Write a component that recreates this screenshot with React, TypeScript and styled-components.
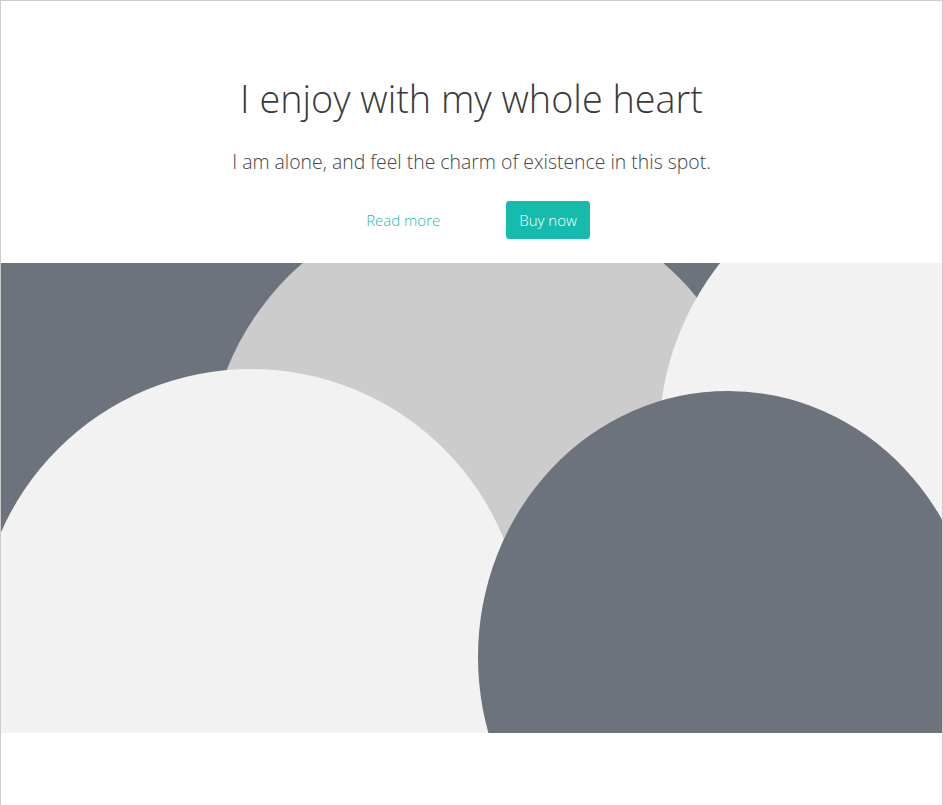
import React from "react";
import styled, { createGlobalStyle } from "styled-components";

const Global = createGlobalStyle`
  html, body { margin: 0; padding: 0; background: #ffffff; }
  body { font-family: "Open Sans", "Noto Sans", sans-serif; color: #444444; }
  * { box-sizing: border-box; }
`;

const Frame = styled.div`
  width: 943px;
  min-height: 830px;
  border: 1px solid #cccccc;
  background: #ffffff;
  display: flex;
  flex-direction: column;
`;

const Hero = styled.section`
  padding-top: 74px;
  display: flex;
  flex-direction: column;
  align-items: center;
  text-align: center;
`;

const Title = styled.h1`
  margin: 0;
  font-family: "Open Sans", "Noto Sans", sans-serif;
  font-weight: 300;
  font-size: 37.8px;
  line-height: 48px;
  color: #3a3a3a;
`;

const Lead = styled.p`
  margin: 24px 0 0;
  font-family: "Open Sans", "Noto Sans", sans-serif;
  font-weight: 300;
  font-size: 19.4px;
  line-height: 30px;
  color: #444444;
`;

const Actions = styled.div`
  margin-top: 24px;
  display: flex;
  align-items: center;
  gap: 53px;
`;

const Button = styled.a<{ $solid?: boolean }>`
  display: inline-flex;
  align-items: center;
  justify-content: center;
  height: 38px;
  padding: 0 12px;
  border: 1px solid ${(p) => (p.$solid ? "#15bbad" : "transparent")};
  border-radius: 3px;
  background: ${(p) => (p.$solid ? "#15bbad" : "transparent")};
  color: ${(p) => (p.$solid ? "#ffffff" : "#15bbad")};
  font-family: "Open Sans", "Noto Sans", sans-serif;
  font-weight: 300;
  font-size: 15px;
  text-decoration: none;
  cursor: pointer;
`;

const Picture = styled.div`
  margin-top: 24px;
  height: 470px;
  background: #6c737c;
  overflow: hidden;
  svg { display: block; width: 100%; height: 100%; }
`;

export default function App() {
  return (
    <>
      <Global />
      <Frame>
        <Hero>
          <Title>I enjoy with my whole heart</Title>
          <Lead>I am alone, and feel the charm of existence in this spot.</Lead>
          <Actions>
            <Button href="#">Read more</Button>
            <Button href="#" $solid>
              Buy now
            </Button>
          </Actions>
        </Hero>
        <Picture>
          <svg viewBox="0 0 941 470" preserveAspectRatio="none" aria-hidden="true">
            <rect x="0" y="0" width="941" height="470" fill="#6c737c" />
            <circle cx="482" cy="209" r="276" fill="#cccccc" />
            <circle cx="942" cy="176" r="284" fill="#f2f2f2" />
            <circle cx="250" cy="379" r="273" fill="#f2f2f2" />
            <ellipse cx="727" cy="394" rx="250" ry="266" fill="#6c737c" />
          </svg>
        </Picture>
      </Frame>
    </>
  );
}
